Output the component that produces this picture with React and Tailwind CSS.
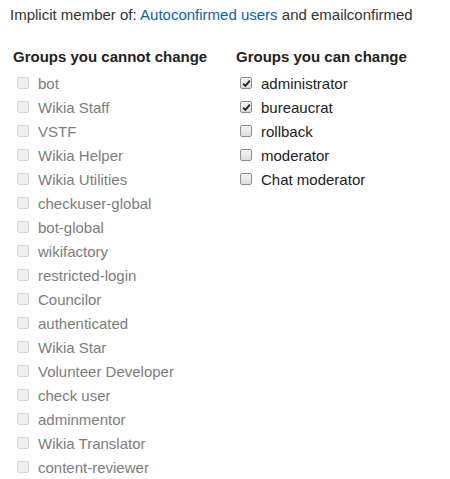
const cannotChange = [
  "bot",
  "Wikia Staff",
  "VSTF",
  "Wikia Helper",
  "Wikia Utilities",
  "checkuser-global",
  "bot-global",
  "wikifactory",
  "restricted-login",
  "Councilor",
  "authenticated",
  "Wikia Star",
  "Volunteer Developer",
  "check user",
  "adminmentor",
  "Wikia Translator",
  "content-reviewer",
];

const canChange = [
  { name: "administrator", checked: true },
  { name: "bureaucrat", checked: true },
  { name: "rollback", checked: false },
  { name: "moderator", checked: false },
  { name: "Chat moderator", checked: false },
];

const Box = ({ checked, disabled }) => {
  if (disabled) {
    return (
      <span className="mt-[5px] ml-[4px] block w-[12px] h-[12px] shrink-0 rounded-[2px] border border-[#d4d4d4] bg-[#f0f0f0]" />
    );
  }
  return (
    <span className="mt-[5px] ml-[4px] flex w-[12px] h-[12px] shrink-0 items-center justify-center rounded-[2px] border border-[#8f8f8f] bg-gradient-to-b from-[#f4f4f4] to-[#dcdcdc]">
      {checked && (
        <svg width="9" height="9" viewBox="0 0 9 9">
          <path d="M1.2 4.6 L3.4 6.9 L7.8 1.6" fill="none" stroke="#222" strokeWidth="1.8" />
        </svg>
      )}
    </span>
  );
};

const Row = ({ label, checked, disabled }) => (
  <label className="flex items-start gap-[9px] h-[24px] leading-[24px]">
    <Box checked={checked} disabled={disabled} />
    <span className={disabled ? "text-[#7d7d7d]" : "text-[#222]"}>{label}</span>
  </label>
);

export default function App() {
  return (
    <div
      className="w-[450px] h-[479px] bg-white px-[10px] pt-[5px] text-[15px] text-[#333]"
      style={{ fontFamily: '"Liberation Sans", Arial, sans-serif' }}
    >
      <p className="leading-[20px]">
        Implicit member of:{" "}
        <a href="#" className="text-[#0b63a8]">
          Autoconfirmed users
        </a>{" "}
        and emailconfirmed
      </p>

      <div className="mt-[22px] flex pl-[3px]">
        <div className="w-[223px]">
          <h3 className="text-[15px] font-bold leading-[20px] text-[#222]">
            Groups you cannot change
          </h3>
          <div className="mt-[5px]">
            {cannotChange.map((g) => (
              <Row key={g} label={g} disabled />
            ))}
          </div>
        </div>
        <div>
          <h3 className="text-[15px] font-bold leading-[20px] text-[#222]">
            Groups you can change
          </h3>
          <div className="mt-[5px]">
            {canChange.map((g) => (
              <Row key={g.name} label={g.name} checked={g.checked} />
            ))}
          </div>
        </div>
      </div>
    </div>
  );
}
